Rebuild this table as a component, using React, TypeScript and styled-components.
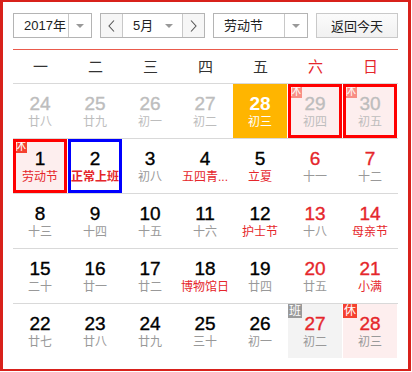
import React from 'react';
import styled, { createGlobalStyle, css } from 'styled-components';

const GlobalStyle = createGlobalStyle`
  html, body {
    margin: 0;
    padding: 0;
    background: #fff;
  }
  body {
    font-family: 'Liberation Sans', 'Noto Sans CJK SC', sans-serif;
    color: #333;
  }
`;

type Tone = 'muted' | 'weekend' | 'normal';
type Fill = 'today' | 'rest' | 'work';

interface Day {
  n: number;
  lunar: string;
  tone?: Tone;
  lunarRed?: boolean;
  lunarBold?: boolean;
  fill?: Fill;
  badge?: '休' | '班';
  faded?: boolean;
  mark?: 'red' | 'blue';
}

const weeks: Day[][] = [
  [
    { n: 24, lunar: '廿八', tone: 'muted' },
    { n: 25, lunar: '廿九', tone: 'muted' },
    { n: 26, lunar: '初一', tone: 'muted' },
    { n: 27, lunar: '初二', tone: 'muted' },
    { n: 28, lunar: '初三', fill: 'today' },
    { n: 29, lunar: '初四', tone: 'muted', fill: 'rest', badge: '休', faded: true, mark: 'red' },
    { n: 30, lunar: '初五', tone: 'muted', fill: 'rest', badge: '休', faded: true, mark: 'red' },
  ],
  [
    { n: 1, lunar: '劳动节', lunarRed: true, fill: 'rest', badge: '休', mark: 'red' },
    { n: 2, lunar: '正常上班', lunarRed: true, lunarBold: true, mark: 'blue' },
    { n: 3, lunar: '初八' },
    { n: 4, lunar: '五四青...', lunarRed: true },
    { n: 5, lunar: '立夏', lunarRed: true },
    { n: 6, lunar: '十一', tone: 'weekend' },
    { n: 7, lunar: '十二', tone: 'weekend' },
  ],
  [
    { n: 8, lunar: '十三' },
    { n: 9, lunar: '十四' },
    { n: 10, lunar: '十五' },
    { n: 11, lunar: '十六' },
    { n: 12, lunar: '护士节', lunarRed: true },
    { n: 13, lunar: '十八', tone: 'weekend' },
    { n: 14, lunar: '母亲节', tone: 'weekend', lunarRed: true },
  ],
  [
    { n: 15, lunar: '二十' },
    { n: 16, lunar: '廿一' },
    { n: 17, lunar: '廿二' },
    { n: 18, lunar: '博物馆日', lunarRed: true },
    { n: 19, lunar: '廿四' },
    { n: 20, lunar: '廿五', tone: 'weekend' },
    { n: 21, lunar: '小满', tone: 'weekend', lunarRed: true },
  ],
  [
    { n: 22, lunar: '廿七' },
    { n: 23, lunar: '廿八' },
    { n: 24, lunar: '廿九' },
    { n: 25, lunar: '三十' },
    { n: 26, lunar: '初一' },
    { n: 27, lunar: '初二', tone: 'weekend', fill: 'work', badge: '班' },
    { n: 28, lunar: '初三', tone: 'weekend', fill: 'rest', badge: '休' },
  ],
];

const weekdays = ['一', '二', '三', '四', '五', '六', '日'];

const RED = '#e5262b';

const Frame = styled.div`
  width: 411px;
  height: 371px;
  box-sizing: border-box;
  border-style: solid;
  border-color: #d8211b;
  border-width: 2px 3px;
  padding: 11px 10px;
`;

const Toolbar = styled.div`
  display: flex;
  align-items: center;
  gap: 8px;
  height: 25px;
  font-size: 13px;
  color: #222;
`;

const Select = styled.div<{ $width: number }>`
  display: flex;
  width: ${({ $width }) => $width}px;
  height: 25px;
  box-sizing: border-box;
  border: 1px solid #b4b4b4;
  background: #fff;
`;

const SelectValue = styled.span`
  flex: 1;
  display: flex;
  align-items: center;
  padding-left: 10px;
  line-height: 23px;
  white-space: nowrap;
`;

const CaretBox = styled.span<{ $divided?: boolean }>`
  width: 23px;
  display: flex;
  align-items: center;
  justify-content: center;
  box-sizing: border-box;
  ${({ $divided }) =>
    $divided
      ? css`border-left: 1px solid #c8c8c8;`
      : css`justify-content: flex-end; padding-right: 9px;`}
`;

const Caret = styled.span`
  width: 0;
  height: 0;
  border-left: 4px solid transparent;
  border-right: 4px solid transparent;
  border-top: 4px solid #999;
`;

const MonthGroup = styled.div`
  display: flex;
  width: 105px;
  height: 25px;
  box-sizing: border-box;
  border: 1px solid #b4b4b4;
`;

const StepButton = styled.button<{ $side: 'left' | 'right' }>`
  width: 22px;
  height: 23px;
  padding: 0;
  margin: 0;
  border: none;
  ${({ $side }) =>
    $side === 'left'
      ? css`border-right: 1px solid #c8c8c8;`
      : css`border-left: 1px solid #c8c8c8;`}
  background: #f6f6f6;
  display: flex;
  align-items: center;
  justify-content: center;
  color: #666;
`;

const MonthSelect = styled.div`
  flex: 1;
  display: flex;
  align-items: center;
`;

const TodayButton = styled.button`
  margin-left: auto;
  width: 82px;
  height: 25px;
  box-sizing: border-box;
  border: 1px solid #c9c9c9;
  background: linear-gradient(#fbfbfb, #f1f1f1);
  font: inherit;
  font-size: 13px;
  color: #222;
  padding: 0;
`;

const Table = styled.div`
  margin-top: 11px;
  border-top: 1px solid #ea5a4c;
`;

const Row = styled.div`
  display: grid;
  grid-template-columns: repeat(7, 55px);
  border-bottom: 1px solid #d9d9d9;

  &:last-child {
    border-bottom: none;
  }
`;

const HeadCell = styled.div<{ $weekend: boolean }>`
  height: 33px;
  line-height: 33px;
  text-align: center;
  font-size: 15px;
  color: ${({ $weekend }) => ($weekend ? RED : '#333')};
`;

const fills: Record<Fill, string> = {
  today: '#ffb500',
  rest: '#fdeeee',
  work: '#f3f3f3',
};

const Cell = styled.div<{ $fill?: Fill; $mark?: 'red' | 'blue' }>`
  position: relative;
  width: 54px;
  height: 54px;
  box-sizing: border-box;
  padding-top: 11px;
  text-align: center;
  background: ${({ $fill }) => ($fill ? fills[$fill] : 'transparent')};

  ${({ $mark }) =>
    $mark &&
    css`
      &::after {
        content: '';
        position: absolute;
        inset: 0;
        border: 3px solid ${$mark === 'red' ? '#ff0000' : '#0000ff'};
        z-index: 2;
      }
    `}
`;

const numberColor = (tone: Tone, today: boolean) => {
  if (today) return '#fff';
  if (tone === 'muted') return '#bdbdbd';
  if (tone === 'weekend') return RED;
  return '#000';
};

const DayNumber = styled.div<{ $color: string; $strong?: boolean }>`
  font-size: 19px;
  line-height: 18px;
  font-weight: ${({ $strong }) => ($strong ? 'bold' : 'normal')};
  color: ${({ $color }) => $color};
  -webkit-text-stroke: ${({ $strong }) => ($strong ? '0' : '0.35px')} currentColor;
`;

const Lunar = styled.div<{ $color: string; $bold?: boolean }>`
  margin-top: 2px;
  font-size: 12px;
  line-height: 14px;
  white-space: nowrap;
  font-weight: ${({ $bold }) => ($bold ? 'bold' : 'normal')};
  color: ${({ $color }) => $color};
`;

const Badge = styled.span<{ $kind: '休' | '班'; $faded?: boolean }>`
  position: absolute;
  top: 0;
  left: 0;
  width: 14px;
  height: 14px;
  font-size: 12px;
  line-height: 14px;
  color: #fff;
  text-align: center;
  z-index: 1;
  background: ${({ $kind }) => ($kind === '休' ? '#f5412f' : '#9a9a9a')};
  opacity: ${({ $faded }) => ($faded ? 0.55 : 1)};
`;

const Chevron = ({ dir }: { dir: 'left' | 'right' }) => (
  <svg width="7" height="12" viewBox="0 0 7 12">
    <polyline
      points={dir === 'left' ? '6,0.5 1,6 6,11.5' : '1,0.5 6,6 1,11.5'}
      fill="none"
      stroke="#555"
      strokeWidth="1.1"
    />
  </svg>
);

const lunarColor = (d: Day) => {
  if (d.fill === 'today') return '#fff';
  if (d.tone === 'muted') return '#bdbdbd';
  if (d.lunarRed) return RED;
  return '#999';
};

export default function App() {
  return (
    <>
      <GlobalStyle />
      <Frame>
        <Toolbar>
          <Select $width={79}>
            <SelectValue>2017年</SelectValue>
            <CaretBox $divided>
              <Caret />
            </CaretBox>
          </Select>
          <MonthGroup>
            <StepButton $side="left">
              <Chevron dir="left" />
            </StepButton>
            <MonthSelect>
              <SelectValue>5月</SelectValue>
              <CaretBox>
                <Caret />
              </CaretBox>
            </MonthSelect>
            <StepButton $side="right">
              <Chevron dir="right" />
            </StepButton>
          </MonthGroup>
          <Select $width={95}>
            <SelectValue>劳动节</SelectValue>
            <CaretBox $divided>
              <Caret />
            </CaretBox>
          </Select>
          <TodayButton>返回今天</TodayButton>
        </Toolbar>

        <Table>
          <Row>
            {weekdays.map((w, i) => (
              <HeadCell key={w} $weekend={i >= 5}>
                {w}
              </HeadCell>
            ))}
          </Row>
          {weeks.map((week, wi) => (
            <Row key={wi}>
              {week.map((d) => (
                <Cell key={`${wi}-${d.n}`} $fill={d.fill} $mark={d.mark}>
                  {d.badge && (
                    <Badge $kind={d.badge} $faded={d.faded}>
                      {d.badge}
                    </Badge>
                  )}
                  <DayNumber
                    $color={numberColor(d.tone || 'normal', d.fill === 'today')}
                    $strong={d.fill === 'today'}
                  >
                    {d.n}
                  </DayNumber>
                  <Lunar $color={lunarColor(d)} $bold={d.lunarBold}>
                    {d.lunar}
                  </Lunar>
                </Cell>
              ))}
            </Row>
          ))}
        </Table>
      </Frame>
    </>
  );
}
